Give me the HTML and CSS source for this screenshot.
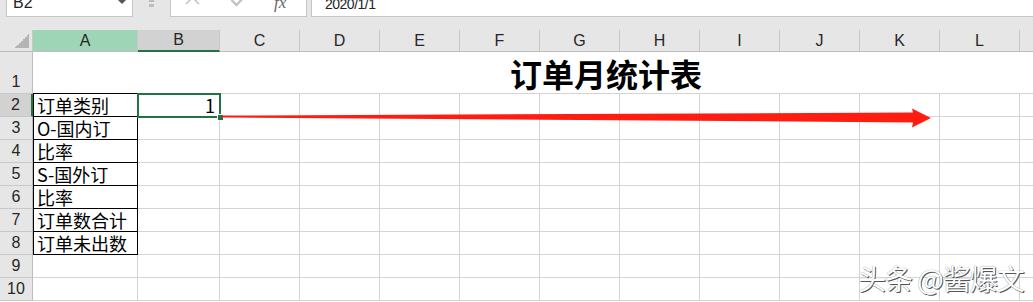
FILE: index.html
```html
<!DOCTYPE html>
<html lang="zh-CN">
    <head>
	<meta charset="utf-8">
        <link rel="stylesheet" href="styles.css">
    </head>
    <body>
<div class="toolbar">
    <div class="namebox"><span>B2</span><span class="drop"></span></div>
    <div class="grip"></div>
    <div class="fxbox">
        <svg class="cross" width="15" height="15" viewBox="0 0 15 15"><path d="M1 1 L14 14 M14 1 L1 14" stroke="#c3c3c3" stroke-width="1.6" fill="none"/></svg>
        <svg class="check" width="17" height="13" viewBox="0 0 17 13"><path d="M1.5 6 L6.5 11 L15.5 1.5" stroke="#c3c3c3" stroke-width="2.4" fill="none"/></svg>
        <span class="fx">fx</span>
    </div>
    <div class="formula">2020/1/1</div>
</div>
<div class="sheet" id="sheet"></div>
<svg class="arrow" width="1033" height="302" viewBox="0 0 1033 302">
    <polygon points="222,115.6 913,112.6 912,108.5 931,118 912,127.5 913,122.4 222,117.4" fill="#ff1d12"/>
</svg>
<div class="mark">头条 @酱爆文</div>

        <script>
let cols = "ABCDEFGHIJKLM";
let labels = ["订单类别", "O-国内订", "比率", "S-国外订", "比率", "订单数合计", "订单未出数"];
let sheet = document.getElementById("sheet");

let cell = (cls, text) => {
    let el = document.createElement("div");
    el.className = cls;
    if (text) el.innerHTML = text;
    sheet.appendChild(el);
    return el;
}

// header row
cell("corner");
for (let i = 0; i < cols.length; i++) {
    let extra = i == 0 ? " colA" : i == 1 ? " colB" : "";
    cell("colhead" + extra, cols[i]);
}

// row 1 is merged across
cell("rowhead", "1");
cell("title", "订单月统计表");

for (let r = 2; r <= 10; r++) {
    cell("rowhead" + (r == 2 ? " active" : ""), r);
    for (let c = 0; c < cols.length; c++) {
        let cls = "cell";
        let text = "";
        if (c == 0 && r <= 8) {
            cls += " bd";
            if (r == 2) cls += " bdtop";
            text = labels[r - 2];
        }
        if (c == 1 && r == 2) {
            cls += " sel num";
            text = "1";
        }
        cell(cls, text);
    }
}
        </script>
    </body>
</html>
```

FILE: styles.css
```css
body{
    margin: 0;
    width: 1033px;
    height: 302px;
    overflow: hidden;
    position: relative;
    background-color: #fff;
    font-family: "Noto Sans CJK SC", sans-serif;
}
.toolbar{
    display: flex;
    align-items: flex-start;
    height: 42px;
    margin-top: -12px;
    background-color: #e6e6e6;
}
.namebox{
    box-sizing: border-box;
    margin-left: 6px;
    width: 127px;
    height: 29px;
    padding: 0 6px;
    display: flex;
    align-items: center;
    justify-content: space-between;
    background-color: #fff;
    border: 1px solid #c6c6c6;
    font: 16px "Liberation Sans", sans-serif;
    color: #222;
}
.drop{
    width: 0;
    height: 0;
    margin-top: -2px;
    border-left: 4px solid transparent;
    border-right: 4px solid transparent;
    border-top: 4px solid #555;
}
.grip{
    margin-left: 16px;
    margin-top: 11px;
    width: 5px;
    height: 3px;
    background-color: #bdbdbd;
    box-shadow: 0 5px 0 #bdbdbd;
}
.fxbox{
    box-sizing: border-box;
    margin-left: 16px;
    width: 137px;
    height: 29px;
    padding-left: 14px;
    display: flex;
    align-items: flex-start;
    background-color: #fff;
    border: 1px solid #c6c6c6;
}
.cross{
    margin-top: 1px;
}
.check{
    margin-top: 5px;
    margin-left: 30px;
}
.fx{
    margin-left: 27px;
    font: italic 17px "Liberation Serif", serif;
    color: #666;
    line-height: 27px;
}
.formula{
    box-sizing: border-box;
    flex: 1;
    margin-left: 4px;
    height: 29px;
    padding-left: 13px;
    padding-top: 2px;
    display: flex;
    align-items: center;
    background-color: #fff;
    border: 1px solid #c6c6c6;
    border-right: 0;
    font: 14px "Liberation Sans", sans-serif;
    letter-spacing: -0.5px;
    color: #222;
}
.sheet{
    display: grid;
    grid-template-columns: 33px 105px 82px repeat(11, 80px);
    grid-template-rows: 22px 42px repeat(9, 23px);
}
.sheet > div{
    box-sizing: border-box;
    display: flex;
}
.corner{
    background: linear-gradient(to bottom right, transparent 50%, #b4b4b4 50%) no-repeat right 3px bottom 3px / 14px 14px, #e6e6e6;
    border-right: 1px solid #c8c8c8;
    border-bottom: 1px solid #bdbdbd;
}
.colhead{
    align-items: center;
    justify-content: center;
    background-color: #e6e6e6;
    border-right: 1px solid #c8c8c8;
    border-bottom: 1px solid #bdbdbd;
    font: 16px "Liberation Sans", sans-serif;
    color: #262626;
}
.colA{
    background-color: #9fd5b7;
}
.colB{
    background-color: #d2d2d2;
    border-bottom: 2px solid #217346;
}
.rowhead{
    align-items: flex-end;
    justify-content: center;
    padding-bottom: 1px;
    background-color: #e6e6e6;
    border-right: 1px solid #bdbdbd;
    border-bottom: 1px solid #c8c8c8;
    font: 16px/20px "Liberation Sans", sans-serif;
    color: #262626;
}
.rowhead.active{
    background-color: #d2d2d2;
    border-right: 2px solid #217346;
}
.title{
    grid-column: 2 / -1;
    align-items: center;
    padding-top: 1px;
    padding-left: 477px;
    border-bottom: 1px solid #d4d4d4;
    font-size: 32px;
    font-weight: bold;
    line-height: 40px;
}
.cell{
    align-items: flex-end;
    padding: 0 4px;
    border-right: 1px solid #d4d4d4;
    border-bottom: 1px solid #d4d4d4;
    font-size: 18px;
    line-height: 21px;
    white-space: nowrap;
}
.bd{
    border-right-color: #000;
    border-bottom-color: #000;
    box-shadow: inset 1px 0 0 #000;
}
.bdtop{
    box-shadow: inset 1px 0 0 #000, 0 -1px 0 #000;
}
.num{
    justify-content: flex-end;
}
.sel{
    position: relative;
    z-index: 1;
    outline: 2px solid #217346;
    outline-offset: -1px;
}
.sel::after{
    content: "";
    position: absolute;
    right: -5px;
    bottom: -5px;
    width: 5px;
    height: 5px;
    background-color: #217346;
    border: 1px solid #fff;
}
.arrow{
    position: absolute;
    left: 0;
    top: 0;
    z-index: 2;
    pointer-events: none;
}
.mark{
    position: absolute;
    left: 858px;
    top: 258px;
    z-index: 3;
    font-size: 28px;
    letter-spacing: -1px;
    line-height: 40px;
    color: #fff;
    white-space: nowrap;
    text-shadow: 1px 1px 0 #555, 0 0 1px #777;
}
```
